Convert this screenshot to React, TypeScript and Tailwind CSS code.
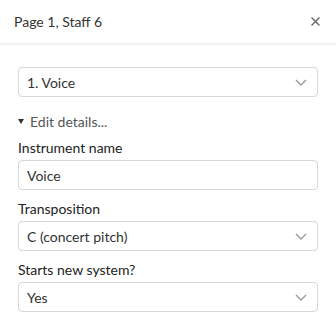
import { useState } from 'react';

function Chevron() {
  return (
    <svg className="h-[7px] w-[12px] shrink-0 text-[#9a9a9a]" viewBox="0 0 12 7" fill="none" stroke="currentColor" strokeWidth="1.4">
      <path d="M1 1l5 5 5-5" />
    </svg>
  );
}

function SelectBox({ value }: { value: string }) {
  return (
    <div className="flex h-[30px] items-center justify-between rounded-[4px] border border-[#d6d6d6] bg-white pl-[8px] pr-[10px] text-[14px] text-[#333]">
      <span>{value}</span>
      <Chevron />
    </div>
  );
}

function Label({ children }: { children: string }) {
  return <div className="mb-[4px] text-[14px] leading-[17px] text-[#222]">{children}</div>;
}

export default function App() {
  const [name, setName] = useState('Voice');

  return (
    <div className="h-[331px] w-[336px] bg-white" style={{ fontFamily: 'Lato, "Open Sans", sans-serif' }}>
      <div className="flex h-[43px] items-center justify-between pl-[14px] pr-[16px]">
        <span className="text-[14px] text-[#333]">Page 1, Staff 6</span>
        <svg className="h-[9px] w-[9px] text-[#666]" viewBox="0 0 9 9" stroke="currentColor" strokeWidth="1.4">
          <path d="M0.5 0.5l8 8M8.5 0.5l-8 8" />
        </svg>
      </div>
      <div className="h-[2px] bg-[#f1f1f1]" />
      <div className="px-[18px] pt-[22px]">
        <SelectBox value="1. Voice" />
        <div className="mt-[16px] flex items-center gap-[6px] text-[14px] leading-[17px] text-[#555]">
          <svg className="h-[5px] w-[6px] text-[#333]" viewBox="0 0 6 5" fill="currentColor">
            <path d="M0 0h6L3 5z" />
          </svg>
          <span>Edit details...</span>
        </div>
        <div className="mt-[9px]">
          <Label>Instrument name</Label>
          <input
            value={name}
            onChange={(e) => setName(e.target.value)}
            className="block h-[30px] w-full rounded-[4px] border border-[#d6d6d6] px-[8px] text-[14px] text-[#333] outline-none"
            style={{ fontFamily: 'inherit' }}
          />
        </div>
        <div className="mt-[10px]">
          <Label>Transposition</Label>
          <SelectBox value="C (concert pitch)" />
        </div>
        <div className="mt-[10px]">
          <Label>Starts new system?</Label>
          <SelectBox value="Yes" />
        </div>
      </div>
    </div>
  );
}
